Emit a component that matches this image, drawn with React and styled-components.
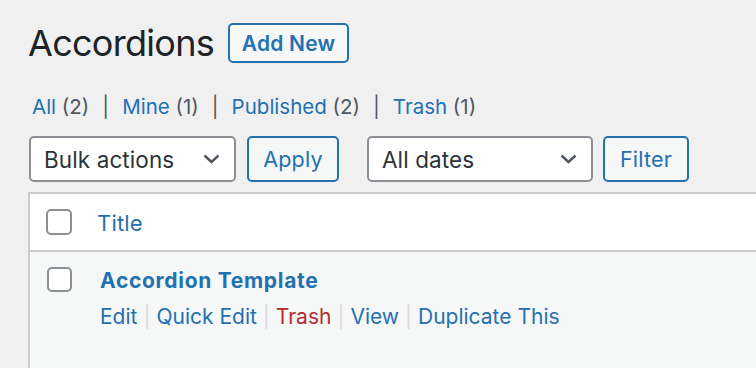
import React from "react";
import styled, { createGlobalStyle } from "styled-components";

const GlobalStyle = createGlobalStyle`
  html, body {
    margin: 0;
    padding: 0;
    background: #f0f0f1;
    font-family: Inter, "Noto Sans", "Liberation Sans", sans-serif;
    color: #1d2327;
  }
`;

const Page = styled.div`
  padding: 18px 0 0 28px;
  height: 368px;
  box-sizing: border-box;
  overflow: hidden;
`;

const HeadRow = styled.div`
  display: flex;
  align-items: center;
  height: 50px;
`;

const Heading = styled.h1`
  margin: 0;
  font-size: 36px;
  font-weight: 400;
  letter-spacing: -0.7px;
  color: #1d2327;
`;

const Button = styled.button`
  box-sizing: border-box;
  height: ${(p) => (p.small ? "40px" : "46px")};
  width: ${(p) => p.w}px;
  margin-left: ${(p) => p.ml || 0}px;
  border: 2px solid #2271b1;
  border-radius: 5px;
  background: #f6f7f7;
  color: #2271b1;
  font-family: inherit;
  font-size: ${(p) => (p.small ? "21px" : "21.5px")};
  font-weight: ${(p) => (p.bold ? 600 : 400)};
  letter-spacing: 0.2px;
  padding: 0;
  cursor: pointer;
`;

const Views = styled.ul`
  display: flex;
  list-style: none;
  margin: 26px 0 0 4px;
  padding: 0;
  font-size: 20.5px;
  color: #50575e;
`;

const ViewItem = styled.li`
  white-space: pre;
`;

const Link = styled.a`
  color: ${(p) => (p.danger ? "#b32d2e" : "#2271b1")};
  text-decoration: none;
`;

const Toolbar = styled.div`
  display: flex;
  align-items: center;
  margin-top: 17px;
`;

const Select = styled.div`
  box-sizing: border-box;
  display: flex;
  align-items: center;
  justify-content: space-between;
  width: ${(p) => p.w}px;
  height: 46px;
  margin-left: ${(p) => p.ml || 0}px;
  padding: 0 14px 0 13px;
  border: 2px solid #8c8f94;
  border-radius: 5px;
  background: #fff;
  color: #2c3338;
  font-size: 22.5px;
  letter-spacing: 0.1px;
`;

const Table = styled.div`
  margin-top: 10px;
  border-top: 2px solid #c9cbce;
  border-left: 2px solid #c9cbce;
  background: #f6f7f7;
  height: 200px;
`;

const Row = styled.div`
  display: flex;
  align-items: ${(p) => (p.head ? "center" : "flex-start")};
  background: ${(p) => (p.head ? "#fff" : "#f6f7f7")};
  height: ${(p) => (p.head ? "56px" : "auto")};
  border-bottom: ${(p) => (p.head ? "2px solid #c9cbce" : "none")};
  padding: ${(p) => (p.head ? "0 0 0 16px" : "15px 0 0 17px")};
`;

const Check = styled.span`
  box-sizing: border-box;
  flex: none;
  width: ${(p) => p.size}px;
  height: ${(p) => p.size}px;
  border: 2px solid #8c8f94;
  border-radius: 5px;
  background: #fff;
  margin-right: ${(p) => p.mr}px;
`;

const TitleHead = styled.a`
  color: #2271b1;
  font-size: 22px;
  letter-spacing: 0.2px;
  text-decoration: none;
  margin-top: 2px;
`;

const Cell = styled.div`
  display: flex;
  flex-direction: column;
`;

const RowTitle = styled.strong`
  font-size: 21px;
  font-weight: 700;
  letter-spacing: 0.7px;
  color: #2271b1;
  line-height: 24px;
  margin-top: 2px;
`;

const Actions = styled.div`
  display: flex;
  margin-top: 11px;
  font-size: 21px;
  color: #dcdcde;
`;

const Sep = styled.span`
  margin: 0 ${(p) => p.gap || 9}px;
  color: ${(p) => p.color || "#dcdcde"};
`;

const Chevron = () => (
  <svg width="17" height="10" viewBox="0 0 17 10" fill="none">
    <polyline points="1.5,1.5 8.5,8 15.5,1.5" stroke="#50575e" strokeWidth="2.4" />
  </svg>
);

const views = [
  ["All", 2],
  ["Mine", 1],
  ["Published", 2],
  ["Trash", 1],
];

const actions = ["Edit", "Quick Edit", "Trash", "View", "Duplicate This"];

export default function App() {
  return (
    <Page>
      <GlobalStyle />
      <HeadRow>
        <Heading>Accordions</Heading>
        <Button small bold w={121} ml={14}>
          Add New
        </Button>
      </HeadRow>
      <Views>
        {views.map(([name, n], i) => (
          <ViewItem key={name}>
            <Link>{name}</Link> ({n})
            {i < views.length - 1 && <Sep gap={13} color="#50575e">|</Sep>}
          </ViewItem>
        ))}
      </Views>
      <Toolbar>
        <Select w={207} ml={1}>
          Bulk actions <Chevron />
        </Select>
        <Button w={92} ml={11}>Apply</Button>
        <Select w={226} ml={28}>
          All dates <Chevron />
        </Select>
        <Button w={86} ml={10}>Filter</Button>
      </Toolbar>
      <Table>
        <Row head>
          <Check size={26} mr={25} />
          <TitleHead>Title</TitleHead>
        </Row>
        <Row>
          <Check size={25} mr={28} />
          <Cell>
            <RowTitle>Accordion Template</RowTitle>
            <Actions>
              {actions.map((a, i) => (
                <span key={a}>
                  <Link danger={a === "Trash"}>{a}</Link>
                  {i < actions.length - 1 && <Sep gap={6}>|</Sep>}
                </span>
              ))}
            </Actions>
          </Cell>
        </Row>
      </Table>
    </Page>
  );
}
